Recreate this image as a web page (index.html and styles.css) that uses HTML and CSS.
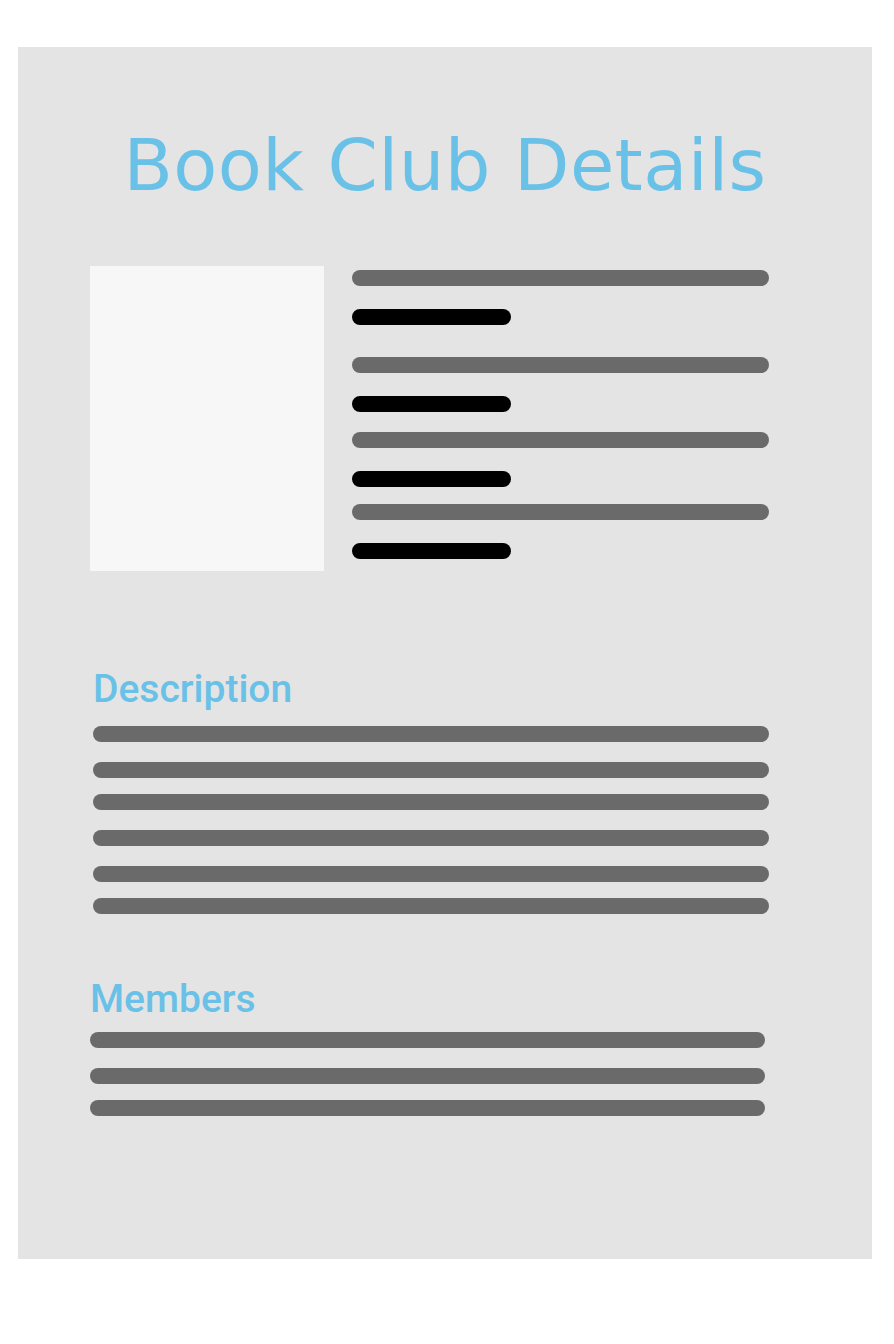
FILE: index.html
```html
<!DOCTYPE html>
<html lang="en">
<head>
    <meta charset="UTF-8">
    <title>Book Club Details</title>
    <meta name="viewport" content="width=device-width, initial-scale=1.0">
    <link rel="stylesheet" href="styles.css">
</head>
<body>

    <div class="panel">
        <h1>Book Club Details</h1>

        <div class="book">
            <div class="cover"></div>
            <div class="fields">
                <div class="field">
                    <span class="bar label"></span>
                    <span class="bar value"></span>
                </div>
                <div class="field">
                    <span class="bar label"></span>
                    <span class="bar value"></span>
                </div>
                <div class="field">
                    <span class="bar label"></span>
                    <span class="bar value"></span>
                </div>
                <div class="field">
                    <span class="bar label"></span>
                    <span class="bar value"></span>
                </div>
            </div>
        </div>

        <div class="section description">
            <h2>Description</h2>
            <div class="lines">
                <span class="bar"></span>
                <span class="bar"></span>
                <span class="bar short-gap"></span>
                <span class="bar"></span>
                <span class="bar"></span>
                <span class="bar short-gap"></span>
            </div>
        </div>

        <div class="section members">
            <h2>Members</h2>
            <div class="lines">
                <span class="bar"></span>
                <span class="bar"></span>
                <span class="bar short-gap"></span>
            </div>
        </div>
    </div>

</body>
</html>
```

FILE: styles.css
```css
body {
    margin: 0;
    background: #fff;
}
.panel {
    margin: 47px 0 0 18px;
    width: 854px;
    height: 1212px;
    box-sizing: border-box;
    padding-top: 82px;
    background: #e4e4e4;
}
h1 {
    margin: 0;
    font-family: "DejaVu Sans", sans-serif;
    font-weight: normal;
    font-size: 72px;
    line-height: 1;
    letter-spacing: 0.4px;
    text-align: center;
    color: #6ac1e7;
}
.bar {
    display: block;
    height: 16px;
    border-radius: 8px;
    background: #6a6a6a;
}
.book {
    display: flex;
    gap: 28px;
    margin: 65px 0 0 72px;
}
.cover {
    width: 234px;
    height: 305px;
    background: #f7f7f7;
}
.fields {
    padding-top: 4px;
}
.field .label {
    width: 417px;
}
.field .value {
    width: 159px;
    margin-top: 23px;
    background: #000;
}
.field:nth-child(2) {
    margin-top: 32px;
}
.field:nth-child(3) {
    margin-top: 20px;
}
.field:nth-child(4) {
    margin-top: 17px;
}
.section h2 {
    margin: 0;
    font-family: Roboto, sans-serif;
    font-weight: 500;
    font-size: 39px;
    line-height: 40px;
    color: #6ac1e7;
}
.description {
    margin: 98px 0 0 75px;
    width: 676px;
}
.description .lines {
    margin-top: 17px;
}
.members {
    margin: 65px 0 0 72px;
    width: 675px;
}
.members .lines {
    margin-top: 13px;
}
.lines .bar + .bar {
    margin-top: 20px;
}
.lines .bar.short-gap {
    margin-top: 16px;
}
```
